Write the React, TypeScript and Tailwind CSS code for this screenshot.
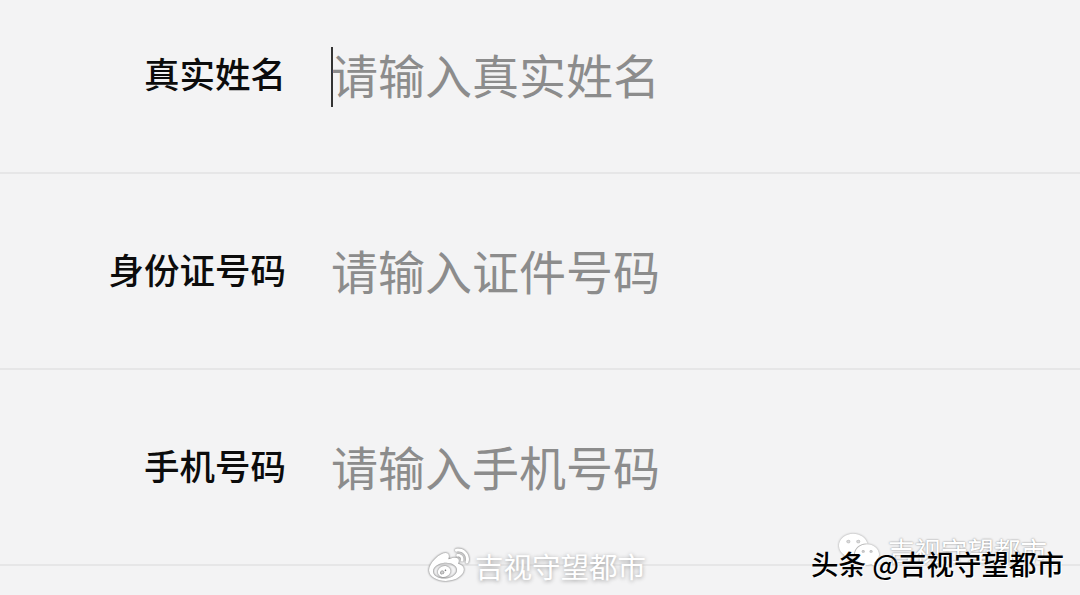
import { FaWeibo, FaWeixin } from "react-icons/fa"

const rows = [
  { label: "真实姓名", placeholder: "请输入真实姓名", focused: true },
  { label: "身份证号码", placeholder: "请输入证件号码", focused: false },
  { label: "手机号码", placeholder: "请输入手机号码", focused: false },
]

export default function App() {
  return (
    <div className="relative h-[595px] w-[1080px] overflow-hidden bg-[#f3f3f4] font-['Noto_Sans_CJK_SC',sans-serif]">
      <div className="-mt-[22px] flex flex-col">
        {rows.map((row) => (
          <div key={row.label} className="flex h-[196px] items-center border-b-2 border-[#e6e6e7] pb-[4px]">
            <div className="w-[286px] text-right text-[35.5px] leading-none font-medium text-[#0c0c0c]">
              {row.label}
            </div>
            <div className="ml-[45px] flex items-center">
              <span className={row.focused ? "mt-[8px] h-[60px] w-[2px] bg-[#333333]" : "mt-[8px] h-[60px] w-[2px]"} />
              <span className="-ml-[2px] text-[47px] leading-none font-normal whitespace-nowrap text-[#8c8c8c]">{row.placeholder}</span>
            </div>
          </div>
        ))}
      </div>

      {/* watermarks */}
      <div className="absolute top-[546px] left-[429px] flex items-center gap-[6px]">
        <FaWeibo className="text-[40px] text-white drop-shadow-[0_0_1px_#555555]" />
        <span className="text-[28.5px] leading-none text-white [text-shadow:0_1px_4px_#9a9a9a]">吉视守望都市</span>
      </div>
      <div className="absolute top-[529px] left-[838px] flex items-center gap-[8px]">
        <FaWeixin className="text-[42px] text-white drop-shadow-[0_0_1px_#999999]" />
        <span className="text-[26.5px] leading-none text-white [text-shadow:0_0_2px_#777777]">吉视守望都市</span>
      </div>
      <div className="absolute top-[550px] left-[811px] text-[27.5px] leading-none font-medium whitespace-nowrap text-black [text-shadow:1px_1px_0_#ffffff]">
        头条 @吉视守望都市
      </div>
    </div>
  )
}
